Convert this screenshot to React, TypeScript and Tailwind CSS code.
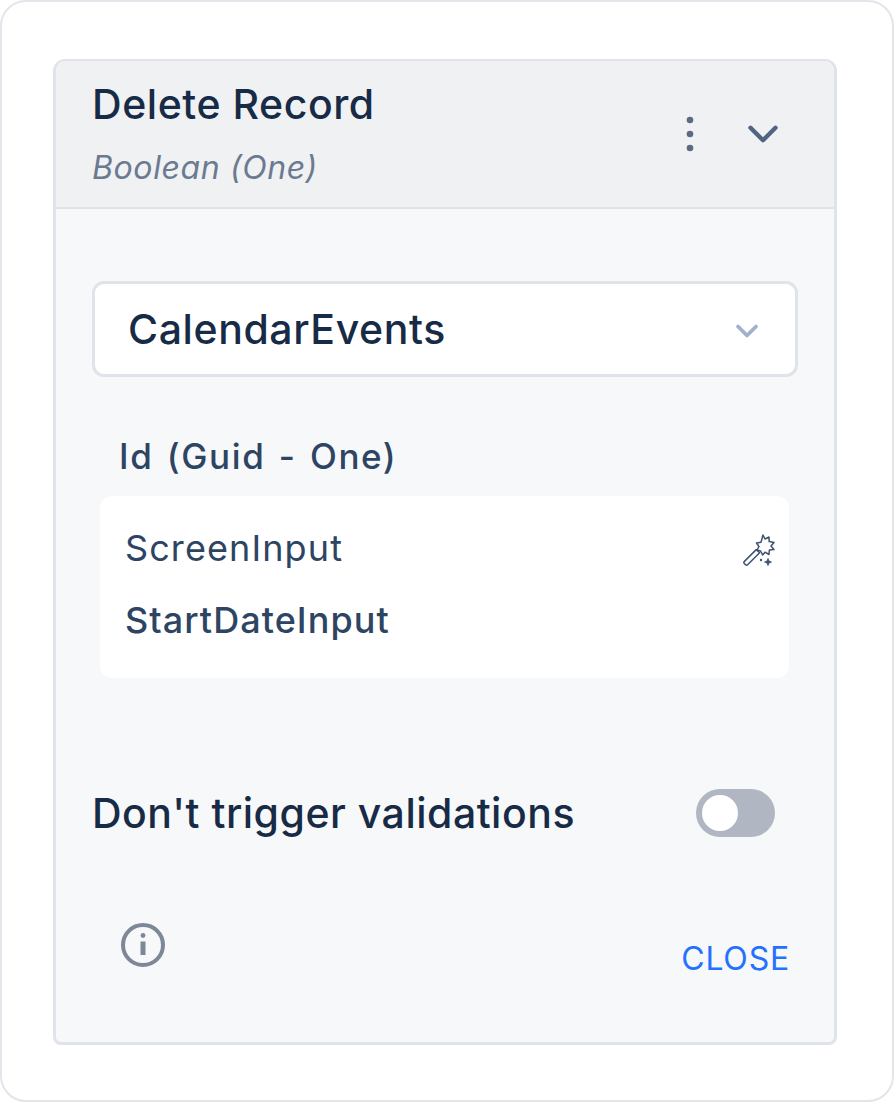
import { ChevronDown } from 'lucide-react';

const inter = "font-['Inter',sans-serif]";

function KebabIcon() {
  return (
    <svg className="w-[24px] h-[48px] text-[#5d6b82]" viewBox="0 0 24 48" fill="currentColor">
      <circle cx="12" cy="10" r="3.3" />
      <circle cx="12" cy="24" r="3.3" />
      <circle cx="12" cy="38" r="3.3" />
    </svg>
  );
}

function WandIcon() {
  return (
    <svg className="absolute right-[12px] top-[38px] w-[36px] h-[36px] text-[#3d5170]" viewBox="0 0 36 36" fill="none" stroke="currentColor" strokeWidth="1.5" strokeLinejoin="round">
      {/* handle */}
      <path d="M3.2 27.6 15.2 15.6 18.6 18.8 6.6 30.8a1.4 1.4 0 0 1-2 0l-1.4-1.4a1.3 1.3 0 0 1 0-1.8Z" />
      {/* burst */}
      <path d="M22 1 24 5 28 3 28.2 7.6 33 8.4 30 12 33 15.4 28.4 16 28 20.5 24 18.2 21.6 21 19.6 17 16 16 18 12.5 15.5 9 20 8.2Z" />
      {/* sparkles */}
      <path d="M27 24.5 28 27 30.5 28 28 29 27 31.5 26 29 23.5 28 26 27Z" fill="currentColor" strokeWidth="0.8" />
      <circle cx="20" cy="26" r="1.2" fill="currentColor" stroke="none" />
    </svg>
  );
}

function InfoIcon() {
  return (
    <svg className="ml-[29px] w-[44px] h-[44px] text-[#7d8896]" viewBox="0 0 44 44" fill="none" stroke="currentColor">
      <circle cx="22" cy="22" r="20" strokeWidth="4" />
      <path d="M22 18.5v13.5" strokeWidth="5" />
      <circle cx="22" cy="12.5" r="2.4" fill="currentColor" stroke="none" />
    </svg>
  );
}

export default function App() {
  return (
    <div className={`${inter} w-[894px] h-[1102px] bg-white border-2 border-[#e2e5ea] rounded-[26px] pt-[57px] pl-[51px]`}>
      <div className="w-[784px] h-[986px] flex flex-col bg-[#f7f8fa] border-[3px] border-t-2 border-[#e1e3ea] rounded-t-[12px] rounded-b-[8px] overflow-hidden">
        {/* header */}
        <div className="h-[148px] shrink-0 flex justify-between bg-[#f0f1f3] border-b-2 border-[#e1e3ea] pl-[36px] pr-[46px]">
          <div>
            <div className="text-[41px] leading-[48px] font-medium tracking-[0.55px] text-[#172b46] mt-[19px]">Delete Record</div>
            <div className="text-[32px] leading-[40px] italic tracking-[0.6px] text-[#6b7a90] mt-[20px]">Boolean (One)</div>
          </div>
          <div className="flex items-center gap-[36px] mt-[-1px]">
            <KebabIcon />
            <ChevronDown className="w-[50px] h-[50px] text-[#526580]" strokeWidth={2.1} />
          </div>
        </div>

        {/* body */}
        <div className="flex-1 flex flex-col pl-[36px] pr-[36px]">
          <div className="mt-[72px] h-[96px] flex items-center justify-between bg-white border-[3px] border-[#e1e3ea] rounded-[12px] pl-[33px] pr-[30px]">
            <span className="text-[41px] leading-[48px] font-medium tracking-[0.6px] text-[#172b46]">CalendarEvents</span>
            <ChevronDown className="mt-[3px] w-[36px] h-[36px] text-[#a3b0cc]" strokeWidth={2.5} />
          </div>

          <div className="mt-[59px] ml-[27px] text-[35px] leading-[40px] font-medium tracking-[1.6px] [word-spacing:2.5px] text-[#2d4463]">Id (Guid - One)</div>

          <div className="relative mt-[20px] ml-[8px] w-[689px] h-[182px] bg-white rounded-[12px] pl-[25px] pt-[30px]">
            <div className="text-[36px] leading-[44px] tracking-[1.1px] text-[#2d4463]">ScreenInput</div>
            <div className="text-[36px] leading-[44px] tracking-[1.05px] font-medium text-[#2d4463] mt-[28px]">StartDateInput</div>
            <WandIcon />
          </div>

          <div className="mt-[111px] flex items-center justify-between pr-[23px]">
            <span className="text-[41px] leading-[48px] font-medium tracking-[0.5px] text-[#172b46]">Don't trigger validations</span>
            <div className="w-[79px] h-[48px] rounded-full bg-[#b0b7c2] flex items-center pl-[6px]">
              <div className="w-[36px] h-[36px] rounded-full bg-white" />
            </div>
          </div>

          <div className="mt-[86px] flex items-start justify-between pr-[8px]">
            <InfoIcon />
            <span className="mt-[16px] text-[32px] leading-[40px] tracking-[0.8px] text-[#2670ff]">CLOSE</span>
          </div>
        </div>
      </div>
    </div>
  );
}
